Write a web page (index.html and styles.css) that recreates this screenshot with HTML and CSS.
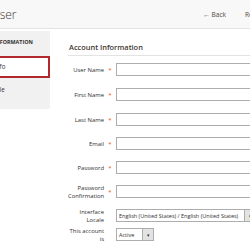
FILE: index.html
```html
<!DOCTYPE html>
<html lang="en">
<head>
  <meta charset="UTF-8">
  <title>New User</title>
  <link rel="stylesheet" href="styles.css">
</head>
<body>

<div class="header">
  <h1 class="title">User</h1>
  <div class="actions">
    <span class="back">&larr; Back</span>
    <span class="reset">Reset</span>
  </div>
</div>

<div class="main">
  <div class="sidebar">
    <div class="nav-title">User Information</div>
    <div class="nav-item active">User Info</div>
    <div class="nav-item">User Role</div>
  </div>

  <div class="content">
    <div class="legend">Account Information</div>
    <div class="form">
      <div class="row">
        <label>User Name</label><span class="req">*</span>
        <div class="input"></div>
      </div>
      <div class="row">
        <label>First Name</label><span class="req">*</span>
        <div class="input"></div>
      </div>
      <div class="row">
        <label>Last Name</label><span class="req">*</span>
        <div class="input"></div>
      </div>
      <div class="row">
        <label>Email</label><span class="req">*</span>
        <div class="input"></div>
      </div>
      <div class="row">
        <label>Password</label><span class="req">*</span>
        <div class="input"></div>
      </div>
      <div class="row">
        <label>Password<br>Confirmation</label><span class="req">*</span>
        <div class="input"></div>
      </div>
      <div class="row">
        <label>Interface<br>Locale</label><span class="req"></span>
        <div class="select wide">
          <span class="value">English (United States) / English (United States)</span>
          <span class="arrow">&#9662;</span>
        </div>
      </div>
      <div class="row last">
        <label>This account<br>is</label><span class="req"></span>
        <div class="select small">
          <span class="value">Active</span>
          <span class="arrow">&#9662;</span>
        </div>
      </div>
    </div>
  </div>
</div>

</body>
</html>
```

FILE: styles.css
```css
* {
  box-sizing: border-box;
}

body {
  margin: 0;
  width: 250px;
  height: 250px;
  overflow: hidden;
  background: #fff;
  font-family: "Open Sans", sans-serif;
  color: #303030;
}

.header {
  display: flex;
  justify-content: space-between;
  align-items: center;
  height: 29px;
  background: #f8f8f8;
  border-bottom: 1px solid #e3e3e3;
}

.title {
  margin: 0 0 0 -9px;
  font-size: 12px;
  font-weight: 300;
  color: #41362f;
}

.actions {
  display: flex;
  gap: 19px;
  margin-right: -12px;
  font-size: 6.6px;
  color: #514943;
  white-space: nowrap;
}

.main {
  display: flex;
  padding-top: 2px;
}

.sidebar {
  flex: none;
  width: 90px;
  margin-left: -40px;
  padding-bottom: 8px;
  background: #f1f1f1;
  border-radius: 0 0 2px 0;
  align-self: flex-start;
}

.nav-title {
  height: 25px;
  line-height: 23px;
  padding-left: 18.5px;
  font-size: 5.4px;
  font-weight: 700;
  text-transform: uppercase;
  color: #303030;
  white-space: nowrap;
}

.nav-item {
  height: 22px;
  line-height: 22px;
  padding-left: 17px;
  font-size: 6.2px;
  color: #303030;
  white-space: nowrap;
}

.nav-item.active {
  background: #fff;
  border: 2px solid #b3282d;
  line-height: 18px;
  padding-left: 17px;
  margin-bottom: 1px;
}

.content {
  flex: 1;
  padding-left: 18px;
}

.legend {
  margin-top: 11px;
  padding: 0 0 3px 1px;
  font-size: 7.4px;
  font-weight: 600;
  color: #41362f;
  border-bottom: 1px solid #e3e3e3;
}

.form {
  display: flex;
  flex-direction: column;
  gap: 11px;
  padding-top: 7px;
}

.row {
  display: flex;
  align-items: center;
  height: 13px;
}

.row:nth-child(2),
.row:nth-child(3) {
  margin-top: 1px;
}

.row.last {
  margin-top: -5px;
}

.row label {
  flex: none;
  width: 36px;
  text-align: right;
  font-size: 5.9px;
  line-height: 8px;
  color: #303030;
  white-space: nowrap;
}

.req {
  flex: none;
  width: 12px;
  text-align: center;
  font-size: 6px;
  color: #eb5202;
}

.input {
  flex: none;
  width: 160px;
  height: 13px;
  border: 1px solid #adadad;
  background: #fff;
}

.select {
  flex: none;
  display: flex;
  height: 13px;
  border: 1px solid #adadad;
  font-size: 5.5px;
  color: #303030;
  white-space: nowrap;
}

.select .value {
  flex: 1;
  display: flex;
  align-items: center;
  padding-left: 2px;
  overflow: hidden;
}

.select .arrow {
  flex: none;
  display: flex;
  align-items: center;
  justify-content: center;
  width: 11px;
  background: #e3e3e3;
  border-left: 1px solid #adadad;
  font-size: 5px;
  color: #41362f;
}

.select.wide {
  width: 140px;
}

.select.small {
  width: 38px;
}
```
